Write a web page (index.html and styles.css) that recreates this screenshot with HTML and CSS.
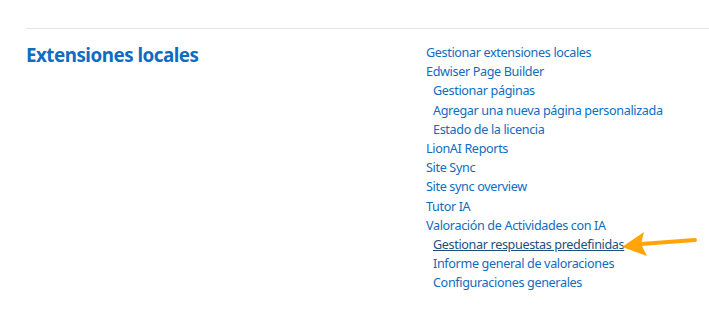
FILE: index.html
```html
<!DOCTYPE html>
<html lang="en">
<head>
    <meta charset="UTF-8">
    <title>Extensiones locales</title>
    <link rel="stylesheet" href="styles.css">
</head>
<body>
<div class="page">
    <div class="section">
        <h3 class="section-title">Extensiones locales</h3>
        <ul class="links">
            <li><a href="#">Gestionar extensiones locales</a></li>
            <li><a href="#">Edwiser Page Builder</a>
                <ul class="links sub">
                    <li><a href="#">Gestionar páginas</a></li>
                    <li><a href="#">Agregar una nueva página personalizada</a></li>
                    <li><a href="#">Estado de la licencia</a></li>
                </ul>
            </li>
            <li><a href="#">LionAI Reports</a></li>
            <li><a href="#">Site Sync</a></li>
            <li><a href="#">Site sync overview</a></li>
            <li><a href="#">Tutor IA</a></li>
            <li><a href="#">Valoración de Actividades con IA</a>
                <ul class="links sub">
                    <li>
                        <span class="marked">
                            <a href="#" class="active">Gestionar respuestas predefinidas</a>
                            <svg class="arrow" width="76" height="28" viewBox="0 0 76 28">
                                <path d="M20 14 L74 10" stroke="#ffa50a" stroke-width="4" stroke-linecap="round" fill="none"/>
                                <path d="M1 17 L23 2 L20 14 L26 26 Z" fill="#ffa50a"/>
                            </svg>
                        </span>
                    </li>
                    <li><a href="#">Informe general de valoraciones</a></li>
                    <li><a href="#">Configuraciones generales</a></li>
                </ul>
            </li>
        </ul>
    </div>
</div>
</body>
</html>
```

FILE: styles.css
```css
body{
    margin:0;
    background:#fff;
    font-family:"Noto Sans","Open Sans",sans-serif;
}
.page{
    padding:28px 0 0 26px;
}
.section{
    display:grid;
    grid-template-columns:400px 1fr;
    border-top:1px solid #e3e5e8;
    padding-top:14px;
}
.section-title{
    margin:0;
    font-size:18.8px;
    font-weight:700;
    line-height:24px;
    color:#0f6cbf;
    letter-spacing:-0.5px;
}
.links{
    list-style:none;
    margin:0;
    padding:0;
    font-size:12.6px;
    line-height:19.2px;
    letter-spacing:-0.35px;
}
.links.sub{
    padding-left:7px;
}
.links a{
    color:#0f6cbf;
    text-decoration:none;
}
.links a.active{
    color:#1b4f7e;
    text-decoration:underline;
}
.marked{
    position:relative;
}
.arrow{
    position:absolute;
    left:100%;
    margin-left:-3px;
    top:-6px;
}
```
